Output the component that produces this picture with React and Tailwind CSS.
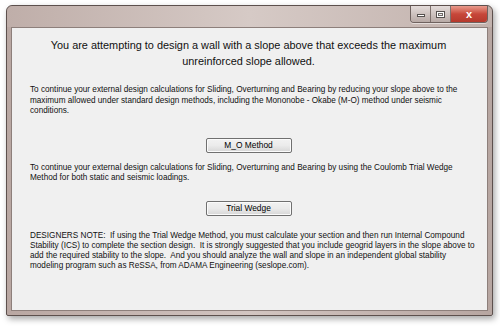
import React from 'react'

const font = { fontFamily: '"Liberation Sans", Arial, sans-serif' }

function CaptionButtons() {
  return (
    <div className="flex items-start h-[17px] rounded-b-[4px] overflow-hidden border border-t-0 border-[#6f625f] shadow-[0_1px_0_rgba(255,255,255,0.5)]">
      <div className="w-[20px] h-full flex items-end justify-center pb-[5px] bg-gradient-to-b from-[#e4dcda] to-[#b8aaa6] border-r border-[#7d706c]">
        <div className="w-[8px] h-[3px] bg-white border border-[#55504e]" />
      </div>
      <div className="w-[20px] h-full flex items-center justify-center bg-gradient-to-b from-[#e4dcda] to-[#b8aaa6] border-r border-[#7d706c]">
        <div className="w-[9px] h-[7px] border border-[#55504e] bg-white flex items-center justify-center">
          <div className="w-[5px] h-[3px] border border-[#6f6a68] bg-[#f0eeee]" />
        </div>
      </div>
      <div className="w-[36px] h-full flex items-center justify-center bg-gradient-to-b from-[#e89a8c] via-[#c7473a] to-[#b5392c]">
        <span className="text-white text-[11px] font-bold leading-none" style={font}>x</span>
      </div>
    </div>
  )
}

function WinButton({ children }) {
  return (
    <div className="w-[86px] h-[15px] mx-auto flex items-center justify-center rounded-[2px] border border-[#707070] bg-gradient-to-b from-[#f2f2f2] via-[#ebebeb] to-[#d6d6d6] shadow-[inset_0_0_0_1px_#fbfbfb] text-[8.4px] text-black">
      {children}
    </div>
  )
}

export default function App() {
  return (
    <div className="w-[500px] h-[326px] bg-white overflow-hidden pl-[6px] pt-[5px]" style={font}>
      <div className="w-[487px] h-[311px] flex flex-col rounded-t-[6px] rounded-b-[2px] border border-[#5d504d] bg-gradient-to-r from-[#b9a7a2] via-[#d2c5c1] to-[#b7a6a1] shadow-[2px_3px_6px_rgba(0,0,0,0.35)]">
        <div className="h-[21px] flex justify-end pr-[4px] bg-gradient-to-r from-[#bfaea9] via-[#d6cac6] to-[#c2b2ad] rounded-t-[6px]">
          <CaptionButtons />
        </div>
        <div className="flex-1 mx-[4px] mb-[4px] bg-[#f0f0f0] border border-[#8d7f7b] text-[#111] pl-[18px] pr-[10px]">
          <div className="mt-[9px] text-center text-[10.9px] leading-[16px] pr-[10px]">
            You are attempting to design a wall with a slope above that exceeds the maximum
            <br />
            unreinforced slope allowed.
          </div>
          <p className="mt-[16px] text-[8.2px] leading-[10.5px] whitespace-nowrap">
            To continue your external design calculations for Sliding, Overturning and Bearing by reducing your slope above to the
            <br />
            maximum allowed under standard design methods, including the Mononobe - Okabe (M-O) method under seismic
            <br />
            conditions.
          </p>
          <div className="mt-[21px] pr-[10px]">
            <WinButton>M_O Method</WinButton>
          </div>
          <p className="mt-[10px] text-[8.2px] leading-[10.5px] whitespace-nowrap">
            To continue your external design calculations for Sliding, Overturning and Bearing by using the Coulomb Trial Wedge
            <br />
            Method for both static and seismic loadings.
          </p>
          <div className="mt-[17px] pr-[10px]">
            <WinButton>Trial Wedge</WinButton>
          </div>
          <p className="mt-[15px] text-[8.2px] leading-[10px] whitespace-nowrap">
            DESIGNERS NOTE:&nbsp; If using the Trial Wedge Method, you must calculate your section and then run Internal Compound
            <br />
            Stability (ICS) to complete the section design.&nbsp; It is strongly suggested that you include geogrid layers in the slope above to
            <br />
            add the required stability to the slope.&nbsp; And you should analyze the wall and slope in an independent global stability
            <br />
            modeling program such as ReSSA, from ADAMA Engineering (seslope.com).
          </p>
        </div>
      </div>
    </div>
  )
}
